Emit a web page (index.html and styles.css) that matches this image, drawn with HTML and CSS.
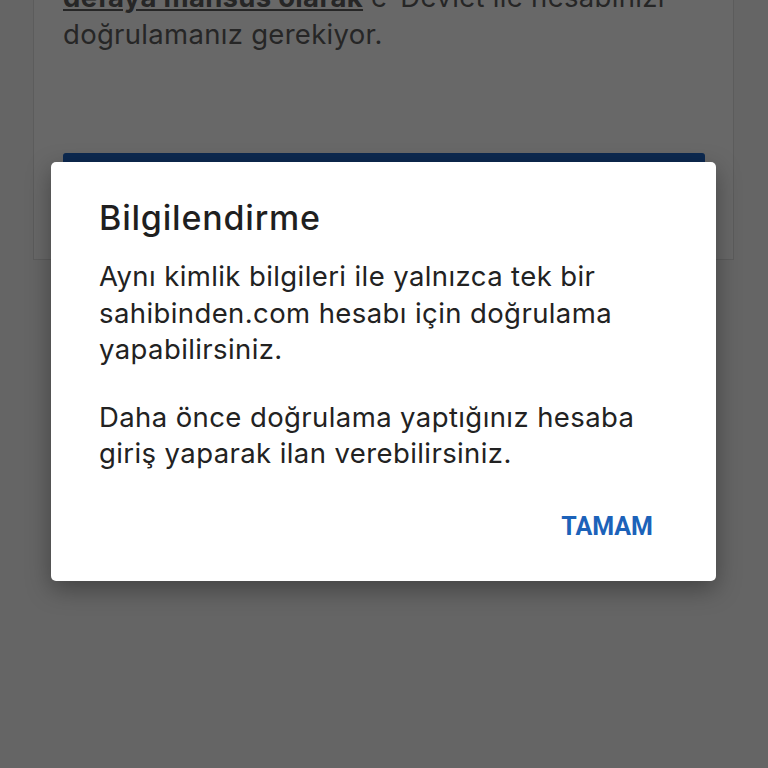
FILE: index.html
```html
<!DOCTYPE html>
<html lang="tr">
<head>
<meta charset="utf-8">
<title>Bilgilendirme</title>
<link rel="stylesheet" href="styles.css">
</head>
<body>
<div class="page">
  <div class="card">
    <p class="card-text"><span class="bold-link">defaya mahsus olarak</span> e-Devlet ile hesabınızı<br>doğrulamanız gerekiyor.</p>
    <div class="card-button"></div>
  </div>
</div>
<div class="overlay">
  <div class="dialog">
    <h1 class="dialog-title">Bilgilendirme</h1>
    <p class="dialog-text">Aynı kimlik bilgileri ile yalnızca tek bir sahibinden.com hesabı için doğrulama yapabilirsiniz.</p>
    <p class="dialog-text">Daha önce doğrulama yaptığınız hesaba giriş yaparak ilan verebilirsiniz.</p>
    <div class="dialog-actions">
      <button class="dialog-btn">TAMAM</button>
    </div>
  </div>
</div>
</body>
</html>
```
FILE: styles.css
```css
html, body {
  margin: 0;
  padding: 0;
  width: 768px;
  height: 768px;
  overflow: hidden;
  background: #656565;
  font-family: Inter, Roboto, "Liberation Sans", sans-serif;
}
.page {
  padding: 0 34px 0 33px;
}
.card {
  margin-top: -21px;
  height: 281px;
  box-sizing: border-box;
  background: #686868;
  border: 1px solid #5c5c5c;
  border-top: none;
  padding: 0 28px 0 29px;
}
.card-text {
  margin: 0;
  font-size: 27.5px;
  line-height: 37px;
  color: #262626;
  white-space: nowrap;
  letter-spacing: 0.3px;
}
.bold-link {
  font-weight: 700;
  text-decoration: underline;
}
.card-button {
  margin-top: 100px;
  height: 56px;
  background: #0c2950;
  border-radius: 3px;
}
.overlay {
  position: absolute;
  left: 0;
  top: 0;
  width: 768px;
  height: 768px;
}
.dialog {
  position: absolute;
  left: 51px;
  top: 162px;
  width: 665px;
  height: 419px;
  box-sizing: border-box;
  background: #ffffff;
  border-radius: 5px;
  box-shadow: 0 8px 24px rgba(0,0,0,0.35);
  padding: 34px 40px 0 48px;
}
.dialog-title {
  margin: 0 0 18px 0;
  font-size: 34px;
  font-weight: 500;
  line-height: 44px;
  color: #1f1f1f;
  letter-spacing: 0.8px;
}
.dialog-text {
  margin: 0 0 31px 0;
  font-size: 27.5px;
  line-height: 36.5px;
  color: #222222;
  letter-spacing: 0.4px;
}
.dialog-actions {
  display: flex;
  justify-content: flex-end;
  margin-top: 40px;
  padding-right: 23px;
}
.dialog-btn {
  border: none;
  background: none;
  padding: 0;
  font-family: Roboto, "Liberation Sans", sans-serif;
  font-weight: 700;
  font-size: 25px;
  line-height: 30px;
  color: #1c62b9;
}
```
